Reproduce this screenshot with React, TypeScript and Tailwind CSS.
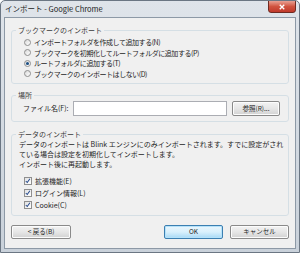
import { ReactNode } from "react";

function Radio({ checked, label }: { checked?: boolean; label: string }) {
  return (
    <div className="flex items-center h-[10.5px] pl-[12px]">
      <span className="relative w-[7px] h-[7px] rounded-full border border-[#8f8f8f] bg-gradient-to-br from-[#d9d9d9] to-[#ffffff] mr-[3px] shrink-0">
        {checked && (
          <span className="absolute left-[1px] top-[1px] w-[3px] h-[3px] rounded-full bg-[#1c4f84]" />
        )}
      </span>
      <span className="tracking-[-0.45px]">{label}</span>
    </div>
  );
}

function Check({ label }: { label: string }) {
  return (
    <div className="flex items-center h-[12px] pl-[12px]">
      <span className="relative w-[8px] h-[8px] border border-[#8f8f8f] bg-gradient-to-br from-[#e2e2e2] to-[#ffffff] mr-[3px] shrink-0">
        <svg viewBox="0 0 8 8" className="absolute left-0 top-0 w-[6px] h-[6px]">
          <path d="M1 4 L3 6 L6.5 1" fill="none" stroke="#2a4d8f" strokeWidth="1.4" />
        </svg>
      </span>
      <span>{label}</span>
    </div>
  );
}

function Group({ title, children, className }: { title: string; children: ReactNode; className?: string }) {
  return (
    <fieldset className={"border border-[#d5dfe5] rounded-[3px] px-0 " + (className ?? "")}>
      <legend className="ml-[4px] px-[2px] h-[10px] leading-[10px] text-[#3a3a3a]">{title}</legend>
      {children}
    </fieldset>
  );
}

function Button({ children, primary, className }: { children: ReactNode; primary?: boolean; className?: string }) {
  return (
    <div
      className={
        "h-[14px] rounded-[2px] border flex items-center justify-center text-[6.5px] " +
        (primary
          ? "border-[#3c7fb1] bg-gradient-to-b from-[#eaf6fd] via-[#d9f0fc] to-[#a7d9f5] shadow-[inset_0_0_0_1px_#b5e2fa] "
          : "border-[#8a8a8a] bg-gradient-to-b from-[#f3f3f3] via-[#e6e6e6] to-[#d2d2d2] shadow-[inset_0_0_0_1px_#fcfcfc] ") +
        (className ?? "")
      }
    >
      {children}
    </div>
  );
}

export default function App() {
  return (
    <div
      className="w-[300px] h-[253px] flex flex-col bg-gradient-to-b from-[#dfe4ea] to-[#c9d1da] border border-[#6b7683] rounded-t-[5px] text-[7px] text-[#1e1e1e] overflow-hidden"
      style={{ fontFamily: '"Noto Sans CJK JP", "Liberation Sans", sans-serif' }}
    >
      <div className="relative h-[16px] flex items-center pl-[4px] text-[7.5px] text-[#1a1a1a]">
        <span>インポート - Google Chrome</span>
        <div className="absolute right-[3px] top-[-1px] w-[28px] h-[13px] rounded-b-[3px] border border-[#6e2a22] bg-gradient-to-b from-[#e8a093] via-[#d0533f] to-[#c0392b] flex items-center justify-center">
          <svg viewBox="0 0 8 8" className="w-[6px] h-[6px]">
            <path d="M1 1 L7 7 M7 1 L1 7" stroke="#ffffff" strokeWidth="1.8" />
          </svg>
        </div>
      </div>
      <div className="flex-1 mx-[3px] mb-[3px] bg-[#f0f0f0] border border-[#8d99a6] flex flex-col px-[6px] pt-[7px]">
        <Group title="ブックマークのインポート" className="pt-[2px] pb-[4px]">
          <Radio label="インポートフォルダを作成して追加する(N)" />
          <Radio label="ブックマークを初期化してルートフォルダに追加する(P)" />
          <Radio checked label="ルートフォルダに追加する(T)" />
          <Radio label="ブックマークのインポートはしない(D)" />
        </Group>
        <Group title="場所" className="mt-[6px] pt-[1px] pb-[5px]">
          <div className="flex items-center pl-[11px] pr-[8px]">
            <span className="w-[50px]">ファイル名(F):</span>
            <div className="w-[154px] h-[15px] bg-white border border-[#abadb3]" />
            <Button className="ml-[5px] w-[48px] h-[15px]">参照(R)...</Button>
          </div>
        </Group>
        <Group title="データのインポート" className="mt-[7px] pb-[4px]">
          <div className="pl-[7px] pr-[4px] leading-[10px]">
            <div>データのインポートは Blink エンジンにのみインポートされます。すでに設定がされ</div>
            <div>ている場合は設定を初期化してインポートします。</div>
            <div>インポート後に再起動します。</div>
          </div>
          <div className="mt-[6px]">
            <Check label="拡張機能(E)" />
            <Check label="ログイン情報(L)" />
            <Check label="Cookie(C)" />
          </div>
        </Group>
        <div className="flex items-center mt-[9px]">
          <Button className="w-[60px]">&lt; 戻る(B)</Button>
          <div className="flex-1" />
          <Button primary className="w-[59px]">OK</Button>
          <Button className="ml-[7px] w-[59px]">キャンセル</Button>
        </div>
      </div>
    </div>
  );
}
